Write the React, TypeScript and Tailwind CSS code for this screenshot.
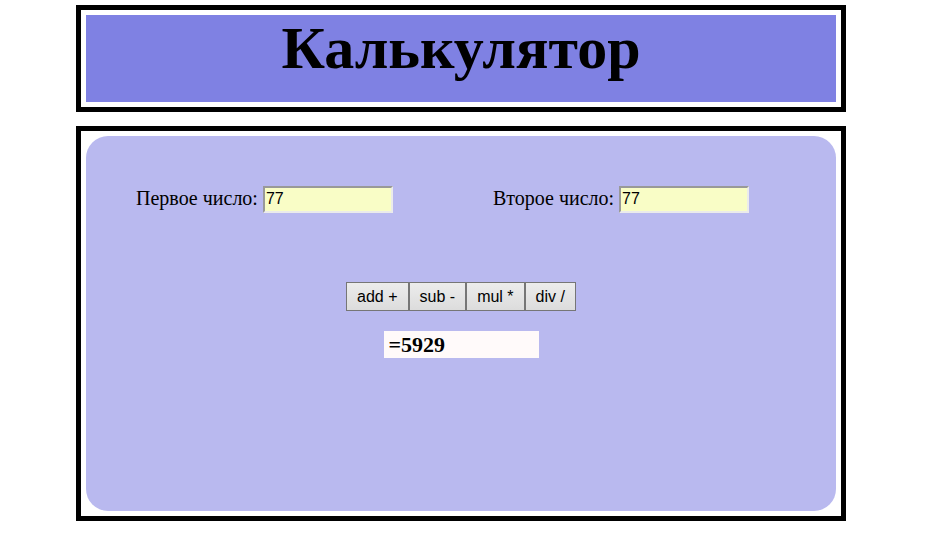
import React, { useState } from 'react';

const App: React.FC = () => {
  const [a, setA] = useState('77');
  const [b, setB] = useState('77');
  const [result, setResult] = useState('5929');

  const calc = (op: string) => {
    const x = parseFloat(a);
    const y = parseFloat(b);
    let r = 0;
    if (op === '+') r = x + y;
    if (op === '-') r = x - y;
    if (op === '*') r = x * y;
    if (op === '/') r = x / y;
    setResult(String(r));
  };

  const ops = [
    { label: 'add +', op: '+' },
    { label: 'sub -', op: '-' },
    { label: 'mul *', op: '*' },
    { label: 'div /', op: '/' },
  ];

  return (
    <div className="min-h-[551px] w-[934px] bg-white pt-[5px] pl-[76px] font-['Liberation_Serif',serif] text-black">
      {/* Header */}
      <div className="w-[770px] border-[5px] border-black p-[5px]">
        <div className="flex h-[87px] items-start justify-center bg-[#7f81e3] pt-[3px]">
          <h1 className="text-[60px] font-bold leading-none tracking-normal">Калькулятор</h1>
        </div>
      </div>

      {/* Calculator */}
      <div className="mt-[14px] w-[770px] border-[5px] border-black p-[5px]">
        <div className="flex h-[375px] flex-col rounded-[22px] bg-[#b9b9ef] pt-[50px]">
          <div className="flex h-[27px] items-center pl-[50px]">
            <label className="flex items-center text-[20px]">
              <span className="mb-[4px]">Первое число:</span>
              <input
                value={a}
                onChange={e => setA(e.target.value)}
                className="ml-[5px] h-[27px] w-[130px] border-2 border-t-[#999999] border-l-[#999999] border-r-[#ebebeb] border-b-[#ebebeb] bg-[#f9fdc6] px-[1px] pb-[2px] font-['Liberation_Sans',sans-serif] text-[16px] outline-none"
              />
            </label>
            <label className="ml-[100px] flex items-center text-[20px]">
              <span className="mb-[4px]">Второе число:</span>
              <input
                value={b}
                onChange={e => setB(e.target.value)}
                className="ml-[5px] h-[27px] w-[130px] border-2 border-t-[#999999] border-l-[#999999] border-r-[#ebebeb] border-b-[#ebebeb] bg-[#f9fdc6] px-[1px] pb-[2px] font-['Liberation_Sans',sans-serif] text-[16px] outline-none"
              />
            </label>
          </div>

          <div className="mt-[69px] flex justify-center">
            {ops.map(o => (
              <button
                key={o.op}
                onClick={() => calc(o.op)}
                className="h-[29px] border border-[#767676] bg-gradient-to-b from-[#ececec] to-[#dcdcdc] px-[10px] font-['Liberation_Sans',sans-serif] text-[16px] leading-none"
              >
                {o.label}
              </button>
            ))}
          </div>

          <div className="mt-[20px] flex justify-center">
            <div className="flex h-[27px] w-[155px] items-center bg-[#fffafa] pl-[5px] text-[22px] font-bold leading-none">
              ={result}
            </div>
          </div>
        </div>
      </div>
    </div>
  );
};

export default App;
